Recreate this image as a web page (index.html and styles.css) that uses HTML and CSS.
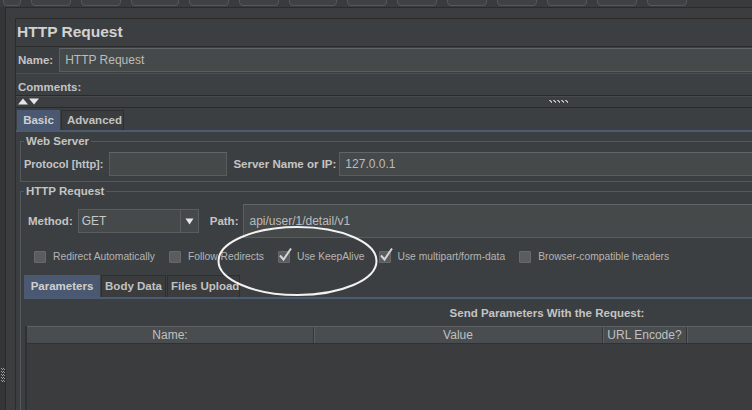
FILE: index.html
```html
<!DOCTYPE html>
<html>
<head>
<meta charset="utf-8">
<title>HTTP Request</title>
<link rel="stylesheet" href="styles.css">
</head>
<body>
<div class="toolbar">
  <span class="tb w18"></span><span class="tb w40"></span><span class="tb w40"></span><span class="tb w48"></span><span class="tb w40"></span><span class="tb w40"></span><span class="tb w48"></span><span class="tb w40"></span><span class="tb w40"></span><span class="tb w40"></span><span class="tb w40"></span><span class="tb w40"></span><span class="tb w40"></span><span class="tb w40"></span>
</div>
<div class="workspace">
  <div class="gutter">
    <svg class="grip-v" width="4" height="16" viewBox="0 0 4 16"><g fill="#9a9c9e"><rect x="0" y="0" width="1" height="1"/><rect x="2" y="0" width="1" height="1"/><rect x="1" y="1" width="1" height="1"/><rect x="3" y="1" width="1" height="1"/><rect x="0" y="3" width="1" height="1"/><rect x="2" y="3" width="1" height="1"/><rect x="1" y="4" width="1" height="1"/><rect x="3" y="4" width="1" height="1"/><rect x="0" y="6" width="1" height="1"/><rect x="2" y="6" width="1" height="1"/><rect x="1" y="7" width="1" height="1"/><rect x="3" y="7" width="1" height="1"/><rect x="0" y="9" width="1" height="1"/><rect x="2" y="9" width="1" height="1"/><rect x="1" y="10" width="1" height="1"/><rect x="3" y="10" width="1" height="1"/><rect x="0" y="12" width="1" height="1"/><rect x="2" y="12" width="1" height="1"/><rect x="1" y="13" width="1" height="1"/><rect x="3" y="13" width="1" height="1"/></g></svg>
  </div>
  <div class="outer">
    <div class="panel">
      <div class="title">HTTP Request</div>
      <div class="row name-row">
        <span class="label">Name:</span>
        <div class="field grow">HTTP Request</div>
      </div>
      <div class="row comments-row">
        <span class="label">Comments:</span>
      </div>
      <div class="divider">
        <svg class="arrows" width="22" height="7" viewBox="0 0 22 7"><polygon points="0,6.5 5,0.5 10,6.5" fill="#e6e6e6"/><polygon points="11,0.5 21,0.5 16,6.5" fill="#e6e6e6"/></svg>
        <svg class="grip-h" width="20" height="5" viewBox="0 0 20 5"><g fill="#b5b7b9"><rect x="0" y="1" width="2" height="1"/><rect x="1" y="2" width="2" height="1"/><rect x="4" y="1" width="2" height="1"/><rect x="5" y="2" width="2" height="1"/><rect x="8" y="1" width="2" height="1"/><rect x="9" y="2" width="2" height="1"/><rect x="12" y="1" width="2" height="1"/><rect x="13" y="2" width="2" height="1"/><rect x="16" y="1" width="2" height="1"/><rect x="17" y="2" width="2" height="1"/><rect x="2" y="3" width="1" height="1"/><rect x="6" y="3" width="1" height="1"/><rect x="10" y="3" width="1" height="1"/><rect x="14" y="3" width="1" height="1"/><rect x="18" y="3" width="1" height="1"/></g></svg>
      </div>
      <div class="tabs main-tabs">
        <span class="tab active">Basic</span><span class="tab">Advanced</span>
      </div>
      <div class="tab-line"></div>
      <div class="tab-body">
        <fieldset class="group web">
          <legend>Web Server</legend>
          <div class="row web-row">
            <span class="label protocol-label">Protocol [http]:</span>
            <div class="field protocol"></div>
            <span class="label server-label">Server Name or IP:</span>
            <div class="field grow server">127.0.0.1</div>
          </div>
        </fieldset>
        <fieldset class="group req">
          <legend>HTTP Request</legend>
          <div class="row method-row">
            <span class="label">Method:</span>
            <div class="combo">
              <span class="combo-value">GET</span>
              <span class="combo-btn"><svg width="9" height="7" viewBox="0 0 9 7"><polygon points="0.5,0.5 8.5,0.5 4.5,6.5" fill="#e8e8e8"/></svg></span>
            </div>
            <span class="label path-label">Path:</span>
            <div class="field grow path">api/user/1/detail/v1</div>
          </div>
          <div class="row checks">
            <span class="check"><span class="box"></span>Redirect Automatically</span>
            <span class="check"><span class="box"></span>Follow Redirects</span>
            <span class="check"><span class="box"><svg width="16" height="16" viewBox="0 0 16 16"><path d="M3 8.5 L6.5 12.5 L14 1.5" fill="none" stroke="#d4d4d4" stroke-width="2"/></svg></span>Use KeepAlive</span>
            <span class="check"><span class="box"><svg width="16" height="16" viewBox="0 0 16 16"><path d="M3 8.5 L6.5 12.5 L14 1.5" fill="none" stroke="#d4d4d4" stroke-width="2"/></svg></span>Use multipart/form-data</span>
            <span class="check"><span class="box"></span>Browser-compatible headers</span>
          </div>
          <div class="tabs param-tabs">
            <span class="tab active">Parameters</span><span class="tab">Body Data</span><span class="tab">Files Upload</span>
          </div>
          <div class="tab-line"></div>
          <div class="params">
            <div class="params-title">Send Parameters With the Request:</div>
            <div class="table">
              <div class="thead">
                <span class="th c-name">Name:</span>
                <span class="th c-value">Value</span>
                <span class="th c-enc">URL Encode?</span>
                <span class="th c-rest"></span>
              </div>
              <div class="tbody"></div>
            </div>
          </div>
        </fieldset>
      </div>
    </div>
  </div>
</div>
<svg class="annotation" width="752" height="410" viewBox="0 0 752 410"><ellipse cx="297.5" cy="261" rx="79" ry="34" fill="none" stroke="#f2f2f2" stroke-width="2"/></svg>
</body>
</html>
```

FILE: styles.css
```css
* { box-sizing: border-box; }
html, body { margin: 0; padding: 0; }
body {
  width: 752px;
  height: 410px;
  overflow: hidden;
  position: relative;
  background: #3c3f41;
  font-family: "Liberation Sans", Arial, sans-serif;
  color: #bbbbbb;
}

/* toolbar remnants */
.toolbar {
  height: 7px;
  display: flex;
  gap: 10px;
  padding-left: 3px;
  background: #393b3d;
  overflow: hidden;
}
.tb {
  flex: none;
  height: 12px;
  margin-top: -6px;
  border: 1px solid #55585a;
  border-radius: 4px;
  background: #3f4244;
}
.w18 { width: 18px; }
.w40 { width: 40px; }
.w48 { width: 48px; }

.workspace { display: flex; height: 403px; }
.gutter {
  flex: none;
  width: 5px;
  background: #333537;
  display: flex;
  flex-direction: column;
  justify-content: flex-end;
  padding-bottom: 26px;
  padding-left: 1px;
}
.outer {
  flex: 1;
  min-width: 0;
  border-left: 1px solid #2b2b2b;
  border-top: 1px solid #2b2b2b;
  padding: 10px 0 0 9px;
  background: #3b3d3f;
  overflow: hidden;
}
.panel {
  width: 1070px;
  height: 100%;
  border-left: 1px solid #2c2c2c;
  background: #3c3f41;
}

.title {
  height: 29px;
  border-top: 1px solid #2b2b2b;
  border-bottom: 1px solid #2b2b2b;
  padding-left: 1px;
  font-size: 15.5px;
  font-weight: bold;
  line-height: 25px;
  color: #d2d2d2;
}

.row { display: flex; align-items: center; }
.label {
  font-size: 11.5px;
  font-weight: bold;
  color: #c4c4c4;
  white-space: nowrap;
}
.field {
  height: 24px;
  background: #45494a;
  border: 1px solid #5a5d5f;
  border-top-color: #626567;
  font-size: 12px;
  line-height: 22px;
  padding-left: 5px;
  color: #bcbcbc;
  white-space: nowrap;
}
.grow { flex: 1; }

.name-row {
  height: 27px;
  padding: 1px 0 1px 2px;
  border-bottom: 1px solid #4d5052;
}
.name-row .field { margin-left: 6px; }
.comments-row {
  height: 21px;
  padding-left: 2px;
  padding-top: 4px;
  background: #3d4042;
}

.divider {
  height: 13px;
  border-top: 1px solid #2a2a2a;
  border-bottom: 1px solid #2a2a2a;
  box-shadow: inset 0 1px 0 #47494b;
  display: flex;
  align-items: center;
  padding-left: 2px;
}
.arrows { display: block; }
.grip-h { margin-left: 509px; display: block; }

.tabs { display: flex; align-items: flex-end; }
.main-tabs { height: 22px; padding-left: 1px; }
.tab {
  flex: none;
  height: 20px;
  line-height: 19px;
  font-size: 11.5px;
  font-weight: bold;
  color: #c2c2c2;
  padding: 0 5px;
  border: 1px solid #2d2f31;
  border-bottom: none;
  background: #3a3c3e;
  margin-right: 1px;
  white-space: nowrap;
  text-align: center;
}
.tab.active {
  background: #4a5872;
  border-color: #4a5872;
  color: #d0d0d0;
}
.main-tabs .tab:first-child { width: 43px; }
.main-tabs .tab:nth-child(2) { width: 63px; }
.tab-line {
  height: 2px;
  background: #4b5b74;
}

.tab-body { padding-left: 4px; }

.group {
  margin: 2px 0 0 0;
  padding: 0 0 5px 3px;
  border: 1px solid #56595b;
  border-right: none;
  min-width: 0;
}
.group legend {
  font-size: 11.5px;
  font-weight: bold;
  line-height: 14px;
  padding: 0 2px;
  color: #c4c4c4;
}

.web-row { height: 24px; margin-top: 4px; }
.protocol-label { font-size: 11px; }
.protocol { flex: none; width: 118px; margin-left: 6px; }
.server-label { margin-left: 6px; }
.server { margin-left: 3px; }

.method-row { height: 34px; margin-top: 6px; padding-left: 4px; }
.combo {
  flex: none;
  width: 121px;
  height: 24px;
  margin-left: 5px;
  display: flex;
  background: #45494a;
  border: 1px solid #5a5d5f;
}
.combo-value {
  flex: 1;
  font-size: 12px;
  line-height: 22px;
  padding-left: 3px;
  color: #c8c8c8;
}
.combo-btn {
  width: 18px;
  border-left: 1px solid #5a5d5f;
  display: flex;
  align-items: center;
  justify-content: center;
}
.combo-btn svg { display: block; }
.path-label { margin-left: 11px; }
.path { height: 34px; margin-left: 5px; line-height: 32px; }

.checks {
  height: 21px;
  margin-top: 8px;
  padding-left: 10px;
  gap: 14px;
}
.check {
  display: flex;
  align-items: center;
  gap: 7px;
  font-size: 10.3px;
  color: #b4b4b4;
  white-space: nowrap;
}
.box {
  flex: none;
  position: relative;
  width: 12px;
  height: 12px;
  background: #5a5c5e;
  border: 1px solid #66686a;
  border-radius: 1px;
}
.box svg { position: absolute; left: -2px; top: -5px; }

.param-tabs { height: 22px; margin-top: 8px; }
.param-tabs .tab { height: 22px; line-height: 21px; padding: 0 3px; }
.param-tabs .tab:first-child { width: 76px; }
.param-tabs .tab:nth-child(2) { width: 65px; }
.param-tabs .tab:nth-child(3) { width: 73px; }

.params { width: 1046px; }
.params-title {
  height: 22px;
  margin-top: 3px;
  line-height: 22px;
  text-align: center;
  font-size: 11.5px;
  font-weight: bold;
  color: #c4c4c4;
}
.table {
  margin-top: 2px;
  margin-left: 1px;
  border-left: 2px solid #2f3133;
}
.thead {
  display: flex;
  height: 18px;
  background: #4a4d4f;
  border-top: 1px solid #5d6062;
  border-bottom: 1px solid #2f3133;
}
.th {
  flex: none;
  font-size: 12px;
  line-height: 16px;
  text-align: center;
  color: #c0c0c0;
  border-right: 1px solid #333537;
  box-shadow: 1px 0 0 #5c5f61;
}
.c-name { width: 287px; }
.c-value { width: 289px; }
.c-enc { width: 84px; }
.c-rest { flex: 1; border-right: none; box-shadow: none; }
.tbody { height: 80px; background: #3b3c3e; }

.annotation {
  position: absolute;
  left: 0;
  top: 0;
  pointer-events: none;
}
```
